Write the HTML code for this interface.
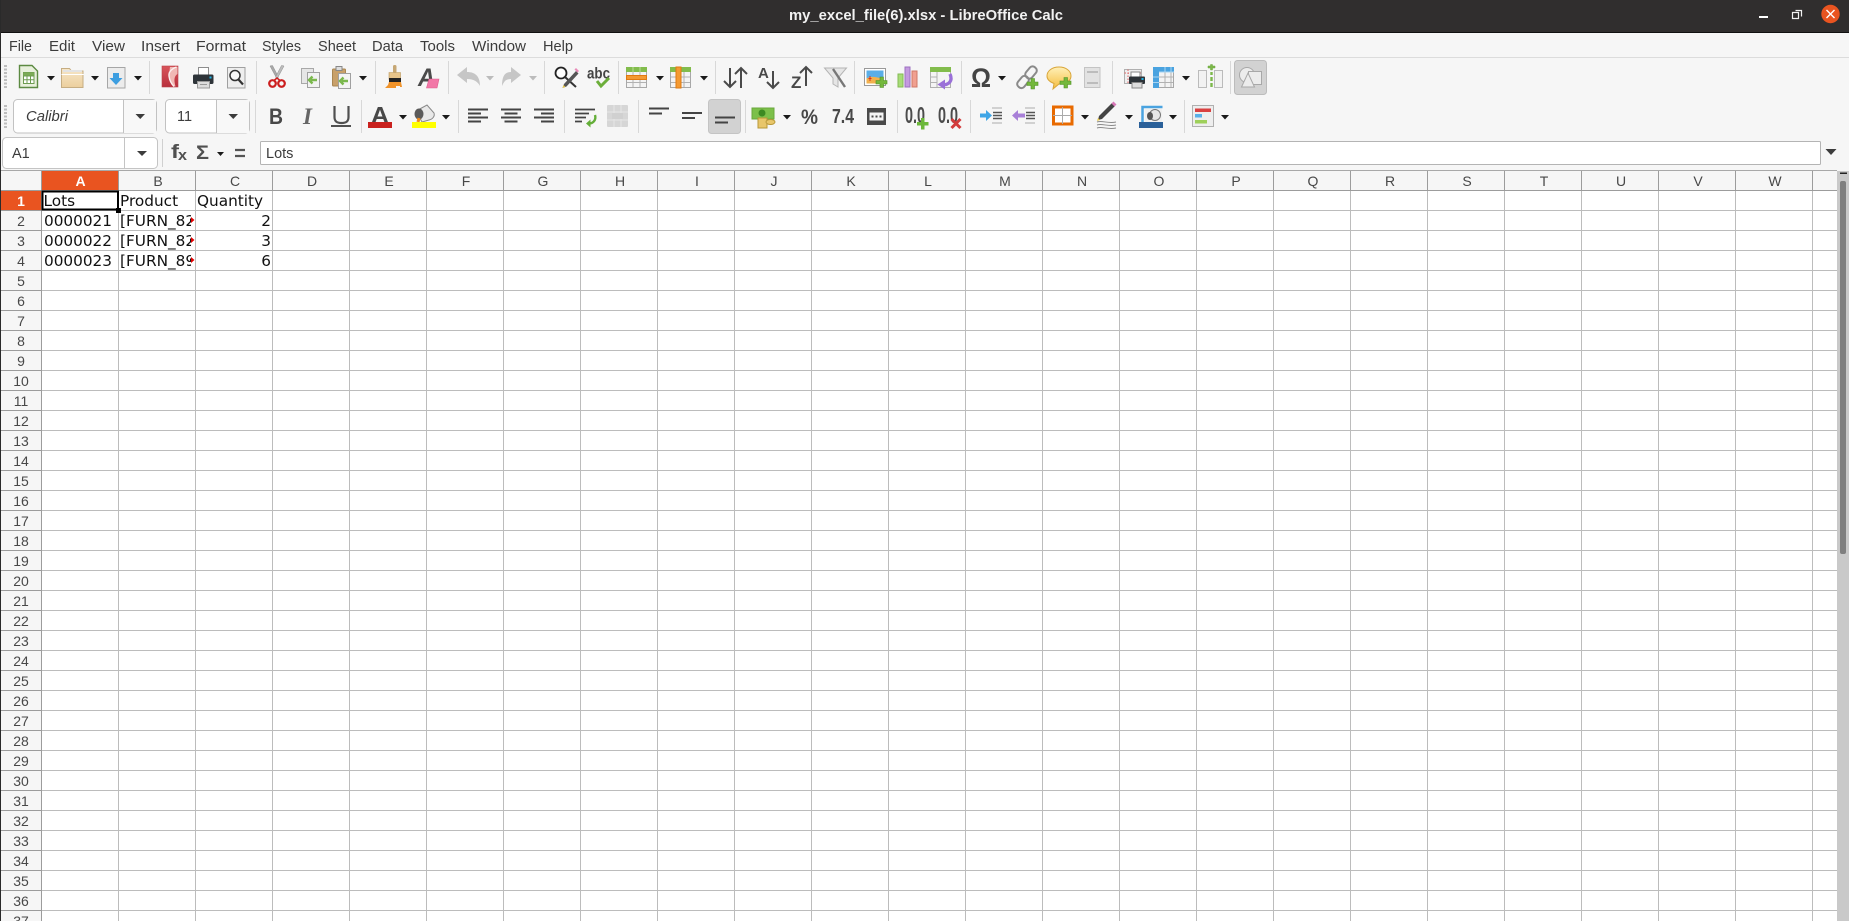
<!DOCTYPE html>
<html>
<head>
<meta charset="utf-8">
<title>my_excel_file(6).xlsx - LibreOffice Calc</title>
<style>
html,body{margin:0;padding:0;width:1849px;height:921px;overflow:hidden;background:#fff}
svg{display:block;position:absolute;left:0;top:0}
text{font-family:"Liberation Sans",sans-serif}
.m{font-size:14.5px;fill:#3c3c3c}
.h{font-size:14px;fill:#484848;text-anchor:middle}
.c{font-family:"DejaVu Sans",sans-serif;font-size:15.3px;fill:#111}
.ar{fill:#1a1a1a}
.sep{stroke:#d8d8d8;stroke-width:1}
</style>
</head>
<body>
<svg width="1849" height="921" viewBox="0 0 1849 921" xmlns="http://www.w3.org/2000/svg">
<defs>
<linearGradient id="fold" x1="0" y1="0" x2="0" y2="1"><stop offset="0" stop-color="#f6e6c8"/><stop offset="1" stop-color="#eccf9d"/></linearGradient>
<linearGradient id="pdf" x1="0" y1="0" x2="0" y2="1"><stop offset="0" stop-color="#d9555b"/><stop offset="1" stop-color="#b82f3c"/></linearGradient>
<linearGradient id="cmt" x1="0" y1="0" x2="0" y2="1"><stop offset="0" stop-color="#fff0b8"/><stop offset="1" stop-color="#f5bd3f"/></linearGradient>
</defs>

<!-- backgrounds -->
<rect width="1849" height="921" fill="#fff"/>
<rect y="33" width="1849" height="138" fill="#f6f6f6"/>
<rect width="1849" height="32" fill="#302e2e"/>
<rect y="32" width="1849" height="1" fill="#111"/>
<rect x="0" y="0" width="1" height="921" fill="#2a2a2a"/>
<rect x="1" y="57" width="1848" height="1" fill="#dcdcdc"/>

<!-- title bar -->
<text x="789" y="20" font-size="14.5" font-weight="bold" fill="#f2f2f2" textLength="274" lengthAdjust="spacingAndGlyphs">my_excel_file(6).xlsx - LibreOffice Calc</text>
<rect x="1759" y="16" width="9" height="2" fill="#fff"/>
<path d="M1796.5 11.5h6v6M1793.5 13.5h6v6h-6z" fill="none" stroke="#f2f2f2" stroke-width="1.2" transform="translate(-1 -1)"/>
<circle cx="1830.5" cy="14" r="9.2" fill="#e95420"/>
<path d="M1826.5 10l8 8M1834.5 10l-8 8" stroke="#fff" stroke-width="1.4"/>

<!-- menu -->
<text class="m" x="9" y="51" textLength="23" lengthAdjust="spacingAndGlyphs">File</text>
<text class="m" x="49" y="51" textLength="26" lengthAdjust="spacingAndGlyphs">Edit</text>
<text class="m" x="92" y="51" textLength="33" lengthAdjust="spacingAndGlyphs">View</text>
<text class="m" x="141" y="51" textLength="39" lengthAdjust="spacingAndGlyphs">Insert</text>
<text class="m" x="196" y="51" textLength="50" lengthAdjust="spacingAndGlyphs">Format</text>
<text class="m" x="262" y="51" textLength="39" lengthAdjust="spacingAndGlyphs">Styles</text>
<text class="m" x="318" y="51" textLength="38" lengthAdjust="spacingAndGlyphs">Sheet</text>
<text class="m" x="372" y="51" textLength="31" lengthAdjust="spacingAndGlyphs">Data</text>
<text class="m" x="420" y="51" textLength="35" lengthAdjust="spacingAndGlyphs">Tools</text>
<text class="m" x="472" y="51" textLength="54" lengthAdjust="spacingAndGlyphs">Window</text>
<text class="m" x="543" y="51" textLength="30" lengthAdjust="spacingAndGlyphs">Help</text>

<!-- grips -->
<path d="M5.5 65v23M5.5 105v23" stroke="#bdbdbd" stroke-width="3" stroke-dasharray="2 1.5"/>

<!-- separators row1 -->
<path class="sep" d="M149.5 61v33M256.5 61v33M375.5 61v33M448.5 61v33M544.5 61v33M618.5 61v33M715.5 61v33M854.5 61v33M961.5 61v33M1112.5 61v33M1230.5 61v33"/>
<!-- separators row2 -->
<path class="sep" d="M255.5 100v33M361.5 100v33M458.5 100v33M564.5 100v33M638.5 100v33M745.5 100v33M897.5 100v33M970.5 100v33M1044.5 100v33M1184.5 100v33"/>

<!-- dropdown arrows row 1 -->
<path class="ar" d="M47 76h8l-4 4.5zM91 76h8l-4 4.5zM134 76h8l-4 4.5zM359 76h8l-4 4.5zM656 76h8l-4 4.5zM700 76h8l-4 4.5zM998 76h8l-4 4.5zM1182 76h8l-4 4.5z"/>
<path fill="#bcbcbc" d="M486 76h8l-4 4.5zM529 76h8l-4 4.5z"/>
<!-- dropdown arrows row 2 -->
<path class="ar" d="M399 115h8l-4 4.5zM442 115h8l-4 4.5zM783 115h8l-4 4.5zM1081 115h8l-4 4.5zM1125 115h8l-4 4.5zM1169 115h8l-4 4.5zM1221 115h8l-4 4.5z"/>

<!-- new spreadsheet -->
<path d="M19.5 65.5h12.5l5.5 5.5v16.5h-18z" fill="#e8f0dc" stroke="#5c8a42" stroke-width="1.4"/>
<rect x="23.5" y="72.5" width="10.5" height="11" fill="#fff" stroke="#6d9c50"/>
<path d="M27 72.5v11M30.5 72.5v11M23.5 76h10.5M23.5 79.7h10.5" stroke="#6d9c50" fill="none"/>
<rect x="23.5" y="72.5" width="10.5" height="3" fill="#7bab56"/>

<!-- open folder -->
<path d="M61.5 87.5v-19h8l2 2.5h11.5v16.5z" fill="url(#fold)" stroke="#c6ad82"/>
<path d="M61.5 74.5h22" stroke="#fff" stroke-width="1"/>
<path d="M63 71h19" stroke="#e3e3e3" stroke-width="2"/>

<!-- save -->
<rect x="107.5" y="67.5" width="17.5" height="20.5" fill="#ececec" stroke="#a6a6a6"/>
<path d="M113 73h6v5h3.500l-6.500 7-6.500-7h3.500z" fill="#3d9ee0"/>

<!-- pdf -->
<rect x="162" y="66" width="16" height="21" fill="url(#pdf)" stroke="#b8434a" stroke-width=".6"/>
<path d="M170 67h7.500v7c-3 2-4 5-2 12.500h-2c-3-5-4-8-4-11 0-3 0-6 .5-8.500z" fill="#f1b8b4"/>
<path d="M176.500 67c-5 2-8 5-7.500 9 .5 4 2.500 8 5 10.500" fill="none" stroke="#fbeeee" stroke-width="1.400"/>

<!-- printer -->
<rect x="198.500" y="67.500" width="10" height="8" fill="#fff" stroke="#8d8d8d"/>
<rect x="193" y="74.500" width="20.500" height="9.500" rx="1.500" fill="#2e3439"/>
<rect x="197.500" y="81.500" width="12" height="6.500" fill="#dcdcdc" stroke="#9a9a9a"/>
<path d="M200 84.500h7" stroke="#999"/>
<rect x="209.500" y="76.500" width="2" height="2" fill="#1eb3e6"/>

<!-- preview -->
<rect x="227.500" y="67.500" width="17.500" height="20.500" fill="#eeeeee" stroke="#a0a0a0"/>
<circle cx="235" cy="75.500" r="5" fill="#f8f8f8" stroke="#333" stroke-width="1.500"/>
<path d="M238.500 79.500l4.500 5" stroke="#333" stroke-width="2.200"/>

<!-- scissors -->
<path d="M270 66l7 13 1.500-2-6-11.500z" fill="#a8a8a8" stroke="#8c8c8c" stroke-width=".5"/>
<path d="M284 66l-7 13-1.500-2 6-11.500z" fill="#bcbcbc" stroke="#8c8c8c" stroke-width=".5"/>
<circle cx="272.500" cy="83.500" r="3.300" fill="none" stroke="#cc1f1f" stroke-width="2.200"/>
<circle cx="281.500" cy="83.500" r="3.300" fill="none" stroke="#cc1f1f" stroke-width="2.200"/>
<path d="M274 80.500l3-2.500 3 2.500" fill="none" stroke="#cc1f1f" stroke-width="1.500"/>

<!-- copy -->
<rect x="301.500" y="68.500" width="12" height="15" fill="#e6e6e6" stroke="#a8a8a8"/>
<rect x="307.500" y="72.500" width="12" height="15" fill="#f2f2f2" stroke="#a0a0a0"/>
<path d="M317 80h-6M312.500 76.500l-3.500 3.500 3.500 3.500" fill="none" stroke="#7ab84c" stroke-width="2.400"/>

<!-- paste -->
<rect x="332.500" y="69" width="13" height="17" rx="1" fill="#c8a06a" stroke="#a98652"/>
<rect x="336" y="66.500" width="6" height="4" fill="#ddd" stroke="#888"/>
<rect x="338.500" y="73.500" width="12" height="15" fill="#f4f4f4" stroke="#a0a0a0"/>
<path d="M348 81h-6M343.500 77.500l-3.500 3.500 3.500 3.500" fill="none" stroke="#7ab84c" stroke-width="2.400"/>

<!-- clone brush -->
<rect x="393" y="65" width="3.500" height="8" rx="1.500" fill="#c6a774"/>
<path d="M389 72.500h11.500v7h-11.500z" fill="#e7c48a" stroke="#b8955c" stroke-width=".6"/>
<rect x="389" y="78" width="12" height="4" fill="#222"/>
<path d="M389 82h12l1 5h-2v-1h-4v2h-11l3-3z" fill="#f0932a"/>

<!-- clear formatting -->
<text x="418" y="86" font-size="25" font-weight="bold" font-style="italic" fill="#4a4a4a" textLength="17" lengthAdjust="spacingAndGlyphs">A</text>
<path d="M429 79h10l-2 9h-10.500z" fill="#f277a7" stroke="#dd5c8d" stroke-width=".6"/>

<!-- undo / redo -->
<path d="M457 75l10-8v5c8 0 13 4 13 14-2-4-6-7-13-7v4z" fill="#c6c6c6"/>
<path d="M521 75l-10-8v5c-6 0-9 4-9 14 2-4 3-7 9-7v4z" fill="#c6c6c6"/>

<!-- find -->
<circle cx="561" cy="73" r="5.500" fill="#fff" stroke="#222" stroke-width="1.800"/>
<path d="M565 77l11 10" stroke="#333" stroke-width="2"/>
<path d="M576 71l-12 13-1.500 4 4-1.500 12-13z" fill="#555"/>
<path d="M574.500 69.500l3 3 1.500-1.500-3-3z" fill="#e88ab8"/>
<path d="M562.500 88l1-3 2 2z" fill="#e8c84a"/>

<!-- spelling -->
<text x="587" y="78.500" font-size="16" font-weight="bold" fill="#444" textLength="23" lengthAdjust="spacingAndGlyphs">abc</text>
<path d="M597 81l4 5 8-8" fill="none" stroke="#6cae3a" stroke-width="3"/>

<!-- rows -->
<rect x="626.500" y="67.500" width="20" height="20" fill="#f4f4f4" stroke="#a8a8a8"/>
<path d="M633 68v19M640 68v19M627 82.500h19" stroke="#b2b2b2"/>
<rect x="626" y="67" width="21" height="5" fill="#82bc4c"/>
<path d="M633 67v5M640 67v5" stroke="#b8dd96"/>
<rect x="626.500" y="75.500" width="20" height="4" fill="#f49a32" stroke="#e07a10"/>

<!-- columns -->
<rect x="670.500" y="67.500" width="20" height="20" fill="#f4f4f4" stroke="#a8a8a8"/>
<path d="M671 77h19M671 82.500h19M684 68v19" stroke="#b2b2b2"/>
<rect x="670" y="67" width="21" height="5" fill="#82bc4c"/>
<rect x="676" y="67" width="5" height="21" fill="#f49a32" stroke="#e07a10"/>

<!-- sort -->
<path d="M730 68v19M724 81l6 6 6-6M741 88v-20M735 74l6-6 6 6" fill="none" stroke="#4a4a4a" stroke-width="2"/>
<!-- sort asc -->
<text x="758" y="78" font-size="15" font-weight="bold" fill="#484848">A</text>
<path d="M773 71v17M767 82l6 6 6-6" fill="none" stroke="#4a4a4a" stroke-width="2"/>
<!-- sort desc -->
<text x="791" y="88" font-size="17" font-weight="bold" fill="#484848">Z</text>
<path d="M806 86v-19M800 73l6-6 6 6" fill="none" stroke="#4a4a4a" stroke-width="2"/>
<!-- autofilter -->
<path d="M824.500 68h22l-8.500 10v9l-5-3v-6z" fill="#e6e6e6" stroke="#b4b4b4"/>
<path d="M833 69l12 18" stroke="#777" stroke-width="2.400"/>

<!-- image -->
<rect x="864.500" y="68.500" width="21" height="17" fill="#fff" stroke="#999"/>
<rect x="866.500" y="70.500" width="17" height="13" fill="#5aaee8"/>
<path d="M866.500 83.500v-5c5-3 10-1 17 0v5z" fill="#f2b14d"/>
<path d="M870 76v5M868.500 78.500h3" stroke="#d8321e"/>
<path d="M877 80h4v-3.500h3.500v3.500h3.500v3.500h-3.500v3.500h-3.500v-3.500h-4z" fill="#74b83c" stroke="#4f8f24" stroke-width=".6" transform="translate(-1 .5)"/>

<!-- chart -->
<rect x="898" y="74" width="5" height="13" fill="#a8dc78" stroke="#84bb54"/>
<rect x="905" y="67" width="5" height="20" fill="#c49ae0" stroke="#9c70c0"/>
<rect x="912" y="71" width="5" height="16" fill="#f0a090" stroke="#d07868"/>

<!-- data provider -->
<rect x="930.500" y="67.500" width="20" height="20" fill="#f4f4f4" stroke="#b0b0b0"/>
<path d="M937 68v19M931 77h6M931 82.500h6" stroke="#b2b2b2"/>
<rect x="930" y="67" width="21" height="5" fill="#82bc4c"/>
<path d="M950 74c3 7-1 11-8 11" fill="none" stroke="#9a70d8" stroke-width="3.400"/>
<path d="M945 79.500l-7.500 5 7.500 5z" fill="#9a70d8"/>

<!-- omega -->
<text x="971" y="87" font-size="27" font-weight="bold" fill="#444" textLength="20" lengthAdjust="spacingAndGlyphs">Ω</text>

<!-- hyperlink -->
<rect x="1027" y="66" width="8" height="13" rx="3.500" fill="none" stroke="#8a8a8a" stroke-width="2" transform="rotate(40 1031 72.500)"/>
<rect x="1019" y="75.500" width="8" height="13" rx="3.500" fill="none" stroke="#8a8a8a" stroke-width="2" transform="rotate(40 1023 82)"/>
<path d="M1027 82h4v-3.500h3.500v3.500h3.500v3.500h-3.500v3.500h-3.500v-3.500h-4z" fill="#74b83c" stroke="#4f8f24" stroke-width=".6"/>

<!-- comment -->
<path d="M1059 67c7 0 12 4 12 9 0 5-5 8-12 8l-6 5 1-5.500c-4-1.500-7-4-7-7.500 0-5 5-9 12-9z" fill="url(#cmt)" stroke="#d9a63a"/>
<path d="M1060 80h4v-3.500h3.500v3.500h3.500v3.500h-3.500v3.500h-3.500v-3.500h-4z" fill="#74b83c" stroke="#4f8f24" stroke-width=".6" transform="translate(0 1)"/>

<!-- header/footer -->
<rect x="1084.500" y="67.500" width="15.500" height="20" fill="#e2e2e2" stroke="#c4c4c4"/>
<path d="M1087 72h11M1087 83h11" stroke="#bcbcbc" stroke-width="2"/>

<!-- print area -->
<rect x="1124.500" y="69.500" width="17" height="14" fill="#efefef" stroke="#b0b0b0"/>
<path d="M1128 69.500v14M1124.500 73h17" stroke="#e06060" stroke-dasharray="1.500 1.500"/>
<rect x="1131" y="72" width="9" height="6" fill="#fff" stroke="#888"/>
<rect x="1129" y="76.500" width="16" height="7.500" rx="1" fill="#2e3439"/>
<rect x="1132" y="82.500" width="10" height="5.500" fill="#ddd" stroke="#888"/>
<rect x="1141.500" y="78" width="2" height="2" fill="#1eb3e6"/>

<!-- freeze -->
<rect x="1153.500" y="67.500" width="20" height="20" fill="#f4f4f4" stroke="#a8a8a8"/>
<path d="M1165 68v19M1171 68v19M1154 77h19M1154 82.500h19" stroke="#b2b2b2"/>
<rect x="1153" y="67" width="21" height="5" fill="#4aa3e0"/>
<rect x="1153" y="67" width="6" height="21" fill="#4aa3e0"/>
<path d="M1159 72h15M1165 67v5M1171 67v5M1153 77h6M1153 82.500h6" stroke="#a8d4f2"/>

<!-- split -->
<rect x="1198.500" y="70.500" width="8" height="17" fill="#f2f2f2" stroke="#bbb"/>
<rect x="1214.500" y="70.500" width="8" height="17" fill="#f2f2f2" stroke="#bbb"/>
<path d="M1208 66h2.500v-1.500h2v1.500h2.500v2h-2.500v2h-2v-2h-2.500z" fill="#7cb84a" stroke="#6aa53c" stroke-width=".5"/>
<path d="M1211.500 72v3M1211.500 77v4M1211.500 83v4" stroke="#7cb84a" stroke-width="2.400"/>

<!-- shapes button -->
<rect x="1234.500" y="60.500" width="32" height="34" rx="3" fill="#d2d2d2" stroke="#bcbcbc"/>
<circle cx="1247" cy="75" r="7.500" fill="#ececec" stroke="#a8a8a8"/>
<rect x="1248.500" y="71.500" width="13" height="13" fill="#ececec" stroke="#a8a8a8"/>
<path d="M1248 73l6.500 14h-13z" fill="#ececec" stroke="#a8a8a8"/>

<!-- font name box -->
<rect x="13.500" y="99.500" width="143" height="33.500" rx="4" fill="#fff" stroke="#c2c2c2"/>
<rect x="123" y="100" width="1" height="33" fill="#c2c2c2"/>
<rect x="124" y="100" width="32" height="33" fill="#f8f8f8"/>
<path d="M135.500 114h9.500l-4.750 5z" fill="#3c3c3c"/>
<text x="26" y="121" font-size="14.500" font-style="italic" fill="#3c3c3c" textLength="42" lengthAdjust="spacingAndGlyphs">Calibri</text>
<!-- font size box -->
<rect x="165.500" y="99.500" width="84" height="33.500" rx="4" fill="#fff" stroke="#c2c2c2"/>
<rect x="216" y="100" width="1" height="33" fill="#c2c2c2"/>
<rect x="217" y="100" width="32" height="33" fill="#f8f8f8"/>
<path d="M228.500 114h9.500l-4.750 5z" fill="#3c3c3c"/>
<text x="177" y="121" font-size="14.500" fill="#3c3c3c">11</text>

<!-- B I U -->
<text x="269" y="124" font-size="22" font-weight="bold" fill="#484848" textLength="14" lengthAdjust="spacingAndGlyphs">B</text>
<text x="303" y="124" font-size="23" font-weight="bold" font-style="italic" fill="#666" style="font-family:'Liberation Serif',serif">I</text>
<path d="M334.500 106v11c0 4.500 2.500 6 7 6s7-1.500 7-6v-11" fill="none" stroke="#505050" stroke-width="2.200"/>
<rect x="331" y="125" width="20" height="2" fill="#505050"/>

<!-- font colour -->
<text x="371" y="123" font-size="23" font-weight="bold" fill="#484848" textLength="18" lengthAdjust="spacingAndGlyphs">A</text>
<rect x="368" y="122" width="24" height="6" fill="#c9211e"/>
<!-- highlight -->
<path d="M416 111l11-6 7 8c1 3-1 6-5 7l-7 2z" fill="#e8e8e8" stroke="#888"/>
<ellipse cx="419" cy="114" rx="4.500" ry="5.500" fill="#5a5a5a"/>
<path d="M419 118l-1 4" stroke="#ee8a1d" stroke-width="3"/>
<rect x="412" y="122" width="24" height="6" fill="#ffff00"/>

<!-- align -->
<path d="M468 109.500h20M468 113.500h13M468 117.500h20M468 121.500h13" stroke="#444" stroke-width="2" fill="none"/>
<path d="M501 109.500h20M504.500 113.500h13M501 117.500h20M504.500 121.500h13" stroke="#444" stroke-width="2" fill="none"/>
<path d="M534 109.500h20M541 113.500h13M534 117.500h20M541 121.500h13" stroke="#444" stroke-width="2" fill="none"/>

<!-- wrap -->
<path d="M575 109.500h20M575 113.500h14M575 117.500h11M575 121.500h7" stroke="#444" stroke-width="1.800" fill="none"/>
<path d="M595 115c1.500 5-2 8.500-6 8.500" fill="none" stroke="#64ae38" stroke-width="2.400"/>
<path d="M590.500 119.500l-4.500 4 4.500 4z" fill="#64ae38"/>

<!-- merge -->
<rect x="607" y="105" width="21" height="22" rx="1" fill="#d6d6d6"/>
<path d="M614 105v22M621 105v22M607 112h21M607 120h21" stroke="#e6e6e6"/>
<rect x="612" y="113" width="11" height="6" fill="#d0d0d0"/>

<!-- vertical align -->
<path d="M649 108.500h20M649 113.500h13" stroke="#444" stroke-width="2"/>
<path d="M682 113h20M682 118h13" stroke="#444" stroke-width="2"/>
<rect x="708.500" y="99.500" width="32" height="34" rx="3" fill="#d2d2d2" stroke="#c4c4c4"/>
<path d="M715 117.500h20M715 122.500h13" stroke="#444" stroke-width="2"/>

<!-- currency -->
<rect x="752" y="108" width="22" height="11" fill="#7cc04a" stroke="#6aa83c"/>
<circle cx="762" cy="113" r="3.500" fill="#3d8a22"/>
<rect x="758" y="118" width="9" height="10" fill="#e8c66a" stroke="#b89838"/>
<ellipse cx="770.500" cy="122" rx="4.500" ry="2.500" fill="#e8c66a" stroke="#b89838"/>

<!-- percent -->
<text x="801" y="124" font-size="21" font-weight="bold" fill="#484848" textLength="17" lengthAdjust="spacingAndGlyphs">%</text>
<!-- number -->
<text x="832" y="123" font-size="20" font-weight="bold" fill="#484848" textLength="22" lengthAdjust="spacingAndGlyphs">7.4</text>
<!-- date -->
<rect x="867" y="108" width="19" height="17" fill="#4a4a4a"/>
<rect x="869.500" y="112.500" width="14" height="8" fill="#f4f4f4"/>
<path d="M871.500 116.500h2M875.500 116.500h2M879.500 116.500h2" stroke="#4a4a4a" stroke-width="2"/>

<!-- add decimal -->
<text x="905" y="123" font-size="23" font-weight="bold" fill="#4c4c4c" textLength="20" lengthAdjust="spacingAndGlyphs">0.0</text>
<path d="M917 122h4v-4h3.500v4h4v3.500h-4v4h-3.500v-4h-4z" fill="#6cb83a"/>
<!-- remove decimal -->
<text x="938" y="123" font-size="23" font-weight="bold" fill="#4c4c4c" textLength="20" lengthAdjust="spacingAndGlyphs">0.0</text>
<path d="M951.500 119l9 9M960.500 119l-9 9" stroke="#d23c3c" stroke-width="3"/>

<!-- indent -->
<path d="M980 113.500h6v-3.500l6 5.500-6 5.500v-3.500h-6z" fill="#3ea5e6"/>
<path d="M993 112.500h9M993 115.500h9M993 118.500h9" stroke="#555" stroke-width="1.500"/>
<path d="M992 108h10M992 123h10" stroke="#bbb" stroke-width="1.200"/>
<!-- outdent -->
<path d="M1025 113.500h-7v-3.500l-6 5.500 6 5.500v-3.500h7z" fill="#a880d8"/>
<path d="M1026 112.500h9M1026 115.500h9M1026 118.500h9" stroke="#555" stroke-width="1.500"/>
<path d="M1025 108h10M1025 123h10" stroke="#bbb" stroke-width="1.200"/>

<!-- borders -->
<rect x="1053.500" y="107" width="18.500" height="17" fill="#fff" stroke="#e86a00" stroke-width="3"/>
<path d="M1062.500 107v17M1053 115.500h19" stroke="#aaa"/>

<!-- border style pencil -->
<path d="M1099 116l13-13 3 3-13 13-4 1z" fill="#444"/>
<path d="M1111.500 103.500l2-2 3 3-2 2z" fill="#d878b8"/>
<path d="M1098 118l-1 3 3-1z" fill="#e8c84a"/>
<path d="M1097 122c5-2 11 2 19 0M1097 125c5-2 11 2 19 0M1097 128c5-2 11 2 19 0" fill="none" stroke="#8a8a8a"/>

<!-- border colour -->
<path d="M1142.500 122v-15h20" fill="none" stroke="#4aa3e0" stroke-width="2.500"/>
<rect x="1145" y="109" width="17" height="14" fill="#f0f0f0"/>
<circle cx="1155" cy="115" r="5.500" fill="#e6e6e6" stroke="#777"/>
<ellipse cx="1150" cy="116" rx="3" ry="4" fill="#555"/>
<rect x="1139" y="122" width="24" height="6" fill="#2a6099"/>

<!-- conditional -->
<rect x="1192.500" y="105.500" width="21" height="21" fill="#eeeeee" stroke="#b0b0b0"/>
<rect x="1195" y="108.500" width="16" height="3.500" fill="#d94040"/>
<rect x="1195" y="114" width="7" height="3.500" fill="#5ab0e8"/>
<rect x="1195" y="120" width="12" height="3.500" fill="#9ed05a"/>

<!-- name box -->
<rect x="2.500" y="137.500" width="155" height="31" rx="4" fill="#fff" stroke="#c4c4c4"/>
<rect x="124" y="138" width="1" height="30" fill="#c4c4c4"/>
<path d="M137 151h10l-5 5z" fill="#3c3c3c"/>
<text x="12" y="158" font-size="14.500" fill="#3c3c3c">A1</text>
<rect x="162" y="139" width="1" height="28" fill="#d0d0d0"/>

<!-- fx sigma = -->
<text x="171" y="158" font-size="19" font-weight="bold" fill="#505050" textLength="8" lengthAdjust="spacingAndGlyphs">f</text>
<text x="178" y="160" font-size="15" font-weight="bold" fill="#505050" textLength="9" lengthAdjust="spacingAndGlyphs">x</text>
<text x="196" y="159" font-size="19" font-weight="bold" fill="#505050" textLength="13" lengthAdjust="spacingAndGlyphs">Σ</text>
<path d="M217 152h7l-3.500 4z" fill="#1a1a1a"/>
<path d="M235 150h10M235 156h10" stroke="#555" stroke-width="2.200"/>

<!-- formula input -->
<rect x="260.500" y="141.500" width="1560" height="23" rx="1" fill="#fff" stroke="#b4b4b4"/>
<text x="266" y="158" font-size="14.500" fill="#3c3c3c">Lots</text>
<path d="M1825.500 149h11l-5.500 6z" fill="#3c3c3c"/>

<!-- grid -->
<rect x="1" y="170" width="1836" height="1" fill="#a8a8a8"/>
<rect x="1" y="171" width="1836" height="19" fill="#f6f6f6"/>
<rect x="1" y="190" width="41" height="731" fill="#f6f6f6"/>
<rect x="42" y="171" width="76" height="19" fill="#e95420"/>
<rect x="1" y="191" width="40" height="19" fill="#e95420"/>

<path d="M118.500 190V921M195.500 190V921M272.500 190V921M349.500 190V921M426.500 190V921M503.500 190V921M580.500 190V921M657.500 190V921M734.500 190V921M811.500 190V921M888.500 190V921M965.500 190V921M1042.500 190V921M1119.500 190V921M1196.500 190V921M1273.500 190V921M1350.500 190V921M1427.500 190V921M1504.500 190V921M1581.500 190V921M1658.500 190V921M1735.500 190V921M1812.500 190V921" stroke="#bcbcbc" fill="none"/>
<path d="M42 210.500H1837M42 230.500H1837M42 250.500H1837M42 270.500H1837M42 290.500H1837M42 310.500H1837M42 330.500H1837M42 350.500H1837M42 370.500H1837M42 390.500H1837M42 410.500H1837M42 430.500H1837M42 450.500H1837M42 470.500H1837M42 490.500H1837M42 510.500H1837M42 530.500H1837M42 550.500H1837M42 570.500H1837M42 590.500H1837M42 610.500H1837M42 630.500H1837M42 650.500H1837M42 670.500H1837M42 690.500H1837M42 710.500H1837M42 730.500H1837M42 750.500H1837M42 770.500H1837M42 790.500H1837M42 810.500H1837M42 830.500H1837M42 850.500H1837M42 870.500H1837M42 890.500H1837M42 910.500H1837" stroke="#bcbcbc" fill="none"/>
<!-- header lines -->
<path d="M41.500 171V921M118.500 171V190M195.500 171V190M272.500 171V190M349.500 171V190M426.500 171V190M503.500 171V190M580.500 171V190M657.500 171V190M734.500 171V190M811.500 171V190M888.500 171V190M965.500 171V190M1042.500 171V190M1119.500 171V190M1196.500 171V190M1273.500 171V190M1350.500 171V190M1427.500 171V190M1504.500 171V190M1581.500 171V190M1658.500 171V190M1735.500 171V190M1812.500 171V190" stroke="#9c9c9c" fill="none"/>
<path d="M1 190.500H1837M1 210.500H41M1 230.500H41M1 250.500H41M1 270.500H41M1 290.500H41M1 310.500H41M1 330.500H41M1 350.500H41M1 370.500H41M1 390.500H41M1 410.500H41M1 430.500H41M1 450.500H41M1 470.500H41M1 490.500H41M1 510.500H41M1 530.500H41M1 550.500H41M1 570.500H41M1 590.500H41M1 610.500H41M1 630.500H41M1 650.500H41M1 670.500H41M1 690.500H41M1 710.500H41M1 730.500H41M1 750.500H41M1 770.500H41M1 790.500H41M1 810.500H41M1 830.500H41M1 850.500H41M1 870.500H41M1 890.500H41M1 910.500H41" stroke="#9c9c9c" fill="none"/>

<!-- col header text -->
<text class="h" x="80.500" y="186" font-weight="bold" style="fill:#fff">A</text>
<text class="h" x="158" y="186">B</text>
<text class="h" x="235" y="186">C</text>
<text class="h" x="312" y="186">D</text>
<text class="h" x="389" y="186">E</text>
<text class="h" x="466" y="186">F</text>
<text class="h" x="543" y="186">G</text>
<text class="h" x="620" y="186">H</text>
<text class="h" x="697" y="186">I</text>
<text class="h" x="774" y="186">J</text>
<text class="h" x="851" y="186">K</text>
<text class="h" x="928" y="186">L</text>
<text class="h" x="1005" y="186">M</text>
<text class="h" x="1082" y="186">N</text>
<text class="h" x="1159" y="186">O</text>
<text class="h" x="1236" y="186">P</text>
<text class="h" x="1313" y="186">Q</text>
<text class="h" x="1390" y="186">R</text>
<text class="h" x="1467" y="186">S</text>
<text class="h" x="1544" y="186">T</text>
<text class="h" x="1621" y="186">U</text>
<text class="h" x="1698" y="186">V</text>
<text class="h" x="1775" y="186">W</text>

<!-- row header text -->
<text class="h" x="21" y="206" font-weight="bold" style="fill:#fff">1</text>
<text class="h" x="21" y="226">2</text>
<text class="h" x="21" y="246">3</text>
<text class="h" x="21" y="266">4</text>
<text class="h" x="21" y="286">5</text>
<text class="h" x="21" y="306">6</text>
<text class="h" x="21" y="326">7</text>
<text class="h" x="21" y="346">8</text>
<text class="h" x="21" y="366">9</text>
<text class="h" x="21" y="386">10</text>
<text class="h" x="21" y="406">11</text>
<text class="h" x="21" y="426">12</text>
<text class="h" x="21" y="446">13</text>
<text class="h" x="21" y="466">14</text>
<text class="h" x="21" y="486">15</text>
<text class="h" x="21" y="506">16</text>
<text class="h" x="21" y="526">17</text>
<text class="h" x="21" y="546">18</text>
<text class="h" x="21" y="566">19</text>
<text class="h" x="21" y="586">20</text>
<text class="h" x="21" y="606">21</text>
<text class="h" x="21" y="626">22</text>
<text class="h" x="21" y="646">23</text>
<text class="h" x="21" y="666">24</text>
<text class="h" x="21" y="686">25</text>
<text class="h" x="21" y="706">26</text>
<text class="h" x="21" y="726">27</text>
<text class="h" x="21" y="746">28</text>
<text class="h" x="21" y="766">29</text>
<text class="h" x="21" y="786">30</text>
<text class="h" x="21" y="806">31</text>
<text class="h" x="21" y="826">32</text>
<text class="h" x="21" y="846">33</text>
<text class="h" x="21" y="866">34</text>
<text class="h" x="21" y="886">35</text>
<text class="h" x="21" y="906">36</text>
<text class="h" x="21" y="926">37</text>

<!-- cells -->
<text class="c" x="43.500" y="206">Lots</text>
<text class="c" x="120" y="206">Product</text>
<text class="c" x="197" y="206">Quantity</text>
<text class="c" x="44" y="226" textLength="68">0000021</text>
<text class="c" x="44" y="246" textLength="68">0000022</text>
<text class="c" x="44" y="266" textLength="68">0000023</text>
<svg x="119" y="211" width="72" height="60">
<text class="c" x="1" y="15">[FURN_8216]</text>
<text class="c" x="1" y="35">[FURN_8270]</text>
<text class="c" x="1" y="55">[FURN_8999]</text>
</svg>
<path d="M191 217l3.500 3-3.500 3zM191 237l3.500 3-3.500 3zM191 257l3.500 3-3.500 3z" fill="#e00000"/>
<path d="M190.500 218.500v3M190.500 238.500v3M190.500 258.500v3" stroke="#111"/>
<text class="c" x="271" y="226" text-anchor="end">2</text>
<text class="c" x="271" y="246" text-anchor="end">3</text>
<text class="c" x="271" y="266" text-anchor="end">6</text>

<!-- selection -->
<rect x="42.500" y="191.500" width="75.500" height="18" fill="none" stroke="#000" stroke-width="2"/>
<rect x="116" y="208" width="5" height="5" fill="#000"/>

<!-- scrollbar -->
<rect x="1837" y="171" width="12" height="750" fill="#c9c9c9"/>
<rect x="1840" y="172.500" width="7" height="1.500" fill="#222"/>
<rect x="1840" y="181" width="6" height="373" rx="2" fill="#7f7f7f"/>
</svg>
</body>
</html>
